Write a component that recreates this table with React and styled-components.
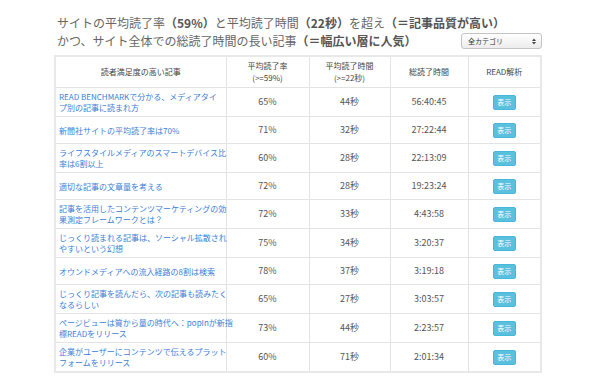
import React from "react";
import styled, { createGlobalStyle } from "styled-components";

const GlobalStyle = createGlobalStyle`
  html, body {
    margin: 0;
    padding: 0;
    background: #fff;
  }
  body {
    font-family: "Noto Sans CJK JP", "Noto Sans", sans-serif;
  }
`;

const Page = styled.div`
  width: 600px;
  padding: 14px 58px 0 54px;
  box-sizing: border-box;
`;

const Header = styled.div`
  display: flex;
  justify-content: space-between;
  align-items: flex-end;
  padding-left: 3px;
  margin-bottom: 5px;
`;

const Title = styled.h2`
  flex: 1;
  min-width: 0;
  margin: 0;
  font-size: 12px;
  line-height: 18px;
  font-weight: normal;
  color: #666;
  white-space: nowrap;
`;

const Strong = styled.strong`
  font-weight: bold;
  color: #555;
`;

const Select = styled.div`
  flex-shrink: 0;
  width: 81px;
  height: 16px;
  box-sizing: border-box;
  margin-bottom: 1px;
  border: 1px solid #c4c4c4;
  border-radius: 3px;
  background: linear-gradient(#ffffff, #ececec);
  display: flex;
  align-items: center;
  justify-content: space-between;
  padding: 0 5px 0 6px;
  font-size: 7px;
  color: #333;
  white-space: nowrap;
`;

const TableBox = styled.div`
  border: 2px solid #e8e8e8;
  box-shadow: 0 1px 1px rgba(0, 0, 0, 0.05);
`;

const Table = styled.table`
  width: 100%;
  border-collapse: collapse;
  table-layout: fixed;
`;

const Th = styled.th`
  border: 1px solid #e3e3e3;
  border-top: none;
  padding: 3px 2px;
  font-size: 8px;
  line-height: 12px;
  font-weight: normal;
  color: #444;
  text-align: center;
  vertical-align: middle;
  &:first-child { border-left: none; }
  &:last-child { border-right: none; }
`;

const Tr = styled.tr`
  height: 27px;
  &:last-child td { border-bottom: none; }
`;

const Td = styled.td`
  border: 1px solid #e3e3e3;
  padding: 3px 2px;
  font-size: 9px;
  line-height: 14px;
  color: #555;
  text-align: center;
  vertical-align: middle;
  &:first-child { border-left: none; }
  &:last-child { border-right: none; }
`;

const TitleCell = styled(Td)`
  text-align: left;
  padding: 3px 4px 3px 3px;
`;

const Link = styled.a`
  display: block;
  font-size: 8px;
  line-height: 11px;
  color: #3a80d9;
  text-decoration: none;
  white-space: nowrap;
`;

const Button = styled.button`
  width: 23px;
  height: 15px;
  padding: 0;
  border: 1px solid #46b8da;
  border-radius: 2px;
  background: #5bc0de;
  color: #fff;
  font-family: inherit;
  font-size: 7px;
  line-height: 13px;
  vertical-align: middle;
`;

const Arrows = () => (
  <svg width="4" height="7" viewBox="0 0 4 7">
    <path d="M0 3 L2 0.5 L4 3 Z" fill="#444" />
    <path d="M0 4 L2 6.5 L4 4 Z" fill="#444" />
  </svg>
);

const rows = [
  [["READ BENCHMARKで分かる、メディアタイ", "プ別の記事に読まれ方"], "65%", "44秒", "56:40:45"],
  [["新聞社サイトの平均読了率は70%"], "71%", "32秒", "27:22:44"],
  [["ライフスタイルメディアのスマートデバイス比", "率は6割以上"], "60%", "28秒", "22:13:09"],
  [["適切な記事の文章量を考える"], "72%", "28秒", "19:23:24"],
  [["記事を活用したコンテンツマーケティングの効", "果測定フレームワークとは？"], "72%", "33秒", "4:43:58"],
  [["じっくり読まれる記事は、ソーシャル拡散され", "やすいという幻想"], "75%", "34秒", "3:20:37"],
  [["オウンドメディアへの流入経路の8割は検索"], "78%", "37秒", "3:19:18"],
  [["じっくり記事を読んだら、次の記事も読みたく", "なるらしい"], "65%", "27秒", "3:03:57"],
  [["ページビューは質から量の時代へ：popInが新指", "標READをリリース"], "73%", "44秒", "2:23:57"],
  [["企業がユーザーにコンテンツで伝えるプラット", "フォームをリリース"], "60%", "71秒", "2:01:34"],
];

export default function App() {
  return (
    <>
      <GlobalStyle />
      <Page>
        <Header>
          <Title>
            サイトの平均読了率<Strong>（59%）</Strong>と平均読了時間<Strong>（22秒）</Strong>を超え
            <Strong>（＝記事品質が高い）</Strong>
            <br />
            かつ、サイト全体での総読了時間の長い記事<Strong>（＝幅広い層に人気）</Strong>
          </Title>
          <Select>
            <span>全カテゴリ</span>
            <Arrows />
          </Select>
        </Header>
        <TableBox>
          <Table>
            <colgroup>
              <col style={{ width: "170px" }} />
              <col style={{ width: "83px" }} />
              <col style={{ width: "81px" }} />
              <col style={{ width: "78px" }} />
              <col />
            </colgroup>
            <thead>
              <tr>
                <Th>読者満足度の高い記事</Th>
                <Th>平均読了率<br />(&gt;=59%)</Th>
                <Th>平均読了時間<br />(&gt;=22秒)</Th>
                <Th>総読了時間</Th>
                <Th>READ解析</Th>
              </tr>
            </thead>
            <tbody>
              {rows.map(([lines, rate, sec, total], i) => (
                <Tr key={i}>
                  <TitleCell>
                    <Link href="#">
                      {lines.map((l, j) => (
                        <React.Fragment key={j}>
                          {j > 0 && <br />}
                          {l}
                        </React.Fragment>
                      ))}
                    </Link>
                  </TitleCell>
                  <Td>{rate}</Td>
                  <Td>{sec}</Td>
                  <Td>{total}</Td>
                  <Td><Button>表示</Button></Td>
                </Tr>
              ))}
            </tbody>
          </Table>
        </TableBox>
      </Page>
    </>
  );
}
